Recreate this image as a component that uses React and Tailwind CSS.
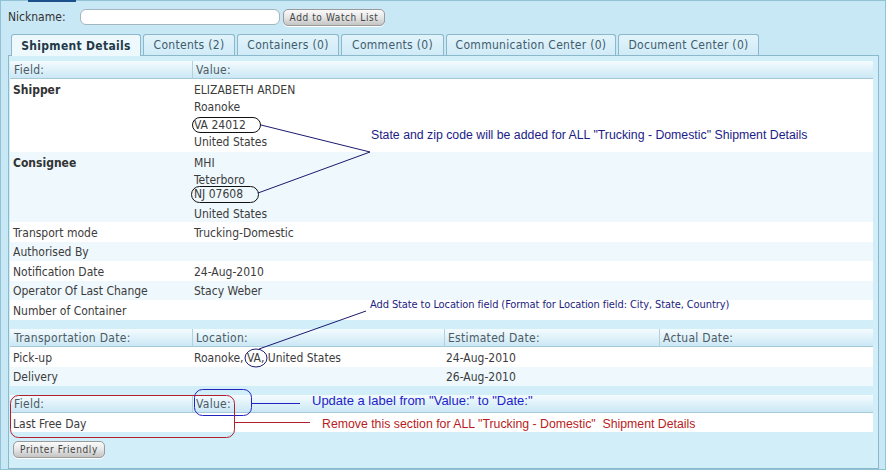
import React from "react";

const tabs = [
  { t: "Shipment Details", w: "w-[130px]", active: true },
  { t: "Contents (2)", w: "w-[92px]" },
  { t: "Containers (0)", w: "w-[102px]" },
  { t: "Comments (0)", w: "w-[103px]" },
  { t: "Communication Center (0)", w: "w-[170px]" },
  { t: "Document Center (0)", w: "w-[141px]" },
];

function Header({ cols }) {
  return (
    <div className="flex h-[18px] border-b border-[#a6c9da] bg-gradient-to-b from-[#f4fbfe] to-[#cbe8f5] text-[#4d5b64]">
      {cols.map((c, i) => (
        <div
          key={i}
          className={`${c.w} ${i > 0 ? "border-l border-[#b2d0de] pl-[3px]" : "pl-[4px]"} pt-[1px] leading-[16px] tracking-[0.3px]`}
        >
          {c.t}
        </div>
      ))}
    </div>
  );
}

function Row({ label, bold, lines, alt, h, pt, lineCls }) {
  const multi = lines.length > 1;
  return (
    <div className={`flex ${h} ${alt ? "bg-[#eef8fd]" : "bg-white"} ${pt}`}>
      <div className={`w-[182px] pl-[3px] ${bold ? "font-bold text-[#333]" : ""} ${multi ? "leading-[17px]" : "leading-[19px]"}`}>
        {label}
      </div>
      <div className="pl-[2px]">
        {lines.map((l, i) => (
          <div key={i} className={lineCls ? lineCls[i] : multi ? "leading-[17.3px]" : "leading-[19px]"}>
            {l}
          </div>
        ))}
      </div>
    </div>
  );
}

function Btn({ children, w }) {
  return (
    <div
      className={`${w} h-[17px] rounded-[5px] border border-[#9a9a9a] bg-gradient-to-b from-[#fafafa] via-[#e6e6e6] to-[#c4c4c4] flex items-center justify-center text-[10px] tracking-[0.6px] text-[#454545] shadow-[0_1px_0_#ffffff]`}
    >
      {children}
    </div>
  );
}

export default function App() {
  return (
    <div className="relative w-[892px] h-[474px] bg-white overflow-hidden font-['DejaVu_Sans_Condensed','DejaVu_Sans',sans-serif] text-[12px] text-[#3c3c3c]">
      <div className="w-[886px] h-[470px] border border-[#93c2d6] bg-[#c9e8f6] flex flex-col">
        <div className="flex items-center h-[18px] mt-[7px] ml-[7px]">
          <span className="w-[72px] text-[#333]">Nickname:</span>
          <div className="w-[200px] h-[16px] rounded-[6px] border border-[#a3b5bf] bg-white" />
          <div className="ml-[3px]">
            <Btn w="w-[102px]">Add to Watch List</Btn>
          </div>
        </div>
        <div className="flex mt-[8px] ml-[10px] h-[21px] items-start gap-[2px] relative z-10">
          {tabs.map((t) =>
            t.active ? (
              <div
                key={t.t}
                className={`${t.w} h-[22px] rounded-t-[3px] border border-b-0 border-[#8cb8cc] bg-[#eef9fd] flex items-center justify-center font-bold text-[#233a48] tracking-[0.3px]`}
              >
                {t.t}
              </div>
            ) : (
              <div
                key={t.t}
                className={`${t.w} h-[21px] rounded-t-[3px] border border-b-0 border-[#8cb8cc] bg-gradient-to-b from-[#e2f4fb] to-[#d0ebf7] flex items-center justify-center text-[#3f5d6d] tracking-[0.3px]`}
              >
                {t.t}
              </div>
            )
          )}
        </div>
        <div className="ml-[7px] w-[871px] flex-1 border border-[#8cb8cc] bg-[#d2eef9] pt-[5px] pl-[1px]">
          <div className="w-[863px]">
            <Header cols={[{ t: "Field:", w: "w-[182px]" }, { t: "Value:", w: "flex-1" }]} />
            <Row
              h="h-[73px]"
              pt="pt-[3px]"
              label="Shipper"
              bold
              lines={["ELIZABETH ARDEN", "Roanoke", "VA 24012", "United States"]}
            />
            <Row
              h="h-[70px]"
              pt="pt-[3px]"
              alt
              label="Consignee"
              bold
              lines={["MHI", "Teterboro", "NJ 07608", "United States"]}
              lineCls={[
                "h-[17px] leading-[17px]",
                "h-[16px] leading-[16px]",
                "h-[13px] leading-[13px]",
                "h-[17px] leading-[17px] mt-[5px]",
              ]}
            />
            <Row h="h-[20px]" pt="pt-[2px]" label="Transport mode" lines={["Trucking-Domestic"]} />
            <Row h="h-[19px]" pt="pt-[1px]" alt label="Authorised By" lines={[""]} />
            <Row h="h-[20px]" pt="pt-[2px]" label="Notification Date" lines={["24-Aug-2010"]} />
            <Row h="h-[19px]" pt="pt-[1px]" alt label="Operator Of Last Change" lines={["Stacy Weber"]} />
            <Row h="h-[20px]" pt="pt-[2px]" label="Number of Container" lines={[""]} />
            <div className="h-[9px]" />
            <Header
              cols={[
                { t: "Transportation Date:", w: "w-[182px]" },
                { t: "Location:", w: "w-[252px]" },
                { t: "Estimated Date:", w: "w-[215px]" },
                { t: "Actual Date:", w: "flex-1" },
              ]}
            />
            <div className="flex h-[20px] bg-white pt-[2px] leading-[19px]">
              <div className="w-[182px] pl-[3px]">Pick-up</div>
              <div className="w-[252px] pl-[2px]">Roanoke, VA, United States</div>
              <div className="pl-[2px]">24-Aug-2010</div>
            </div>
            <div className="flex h-[19px] bg-[#eef8fd] pt-[1px] leading-[19px]">
              <div className="w-[182px] pl-[3px]">Delivery</div>
              <div className="w-[252px] pl-[2px]"></div>
              <div className="pl-[2px]">26-Aug-2010</div>
            </div>
            <div className="h-[9px]" />
            <Header cols={[{ t: "Field:", w: "w-[182px]" }, { t: "Value:", w: "flex-1" }]} />
            <Row h="h-[19px]" pt="pt-[2px]" label="Last Free Day" lines={[""]} />
            <div className="mt-[9px] ml-[3px]">
              <Btn w="w-[92px]">Printer Friendly</Btn>
            </div>
          </div>
        </div>
      </div>

      <div className="absolute left-[28px] top-0 w-[48px] h-[2px] bg-[#1d4f8a]" />

      <svg className="absolute left-0 top-0 pointer-events-none" width="892" height="474" viewBox="0 0 892 474">
        <rect x="192.5" y="117.5" width="68" height="15" rx="7.5" fill="none" stroke="#111" strokeWidth="1" />
        <line x1="261" y1="125" x2="370" y2="152" stroke="#1a1a6e" strokeWidth="1" />
        <rect x="191.5" y="186.5" width="67" height="16" rx="8" fill="none" stroke="#111" strokeWidth="1" />
        <line x1="258" y1="193" x2="370" y2="152" stroke="#1a1a6e" strokeWidth="1" />
        <ellipse cx="256" cy="358" rx="11" ry="9" fill="none" stroke="#1a1a70" strokeWidth="1" />
        <line x1="259" y1="349" x2="366" y2="311" stroke="#1a1a70" strokeWidth="1" />
        <rect x="194.5" y="389.5" width="57" height="26" rx="8" fill="none" stroke="#2323c0" strokeWidth="1" />
        <line x1="251" y1="403.5" x2="300" y2="403.5" stroke="#2323c0" strokeWidth="1" />
        <rect x="10.5" y="395.5" width="224" height="42" rx="8" fill="none" stroke="#b0202e" strokeWidth="1" />
        <line x1="234" y1="422.5" x2="310" y2="422.5" stroke="#b0202e" strokeWidth="1" />
      </svg>

      <div className="absolute left-[371px] top-[127px] font-['Liberation_Sans',sans-serif] text-[12.3px] text-[#1c1c86] whitespace-nowrap leading-[16px]">
        State and zip code will be added for ALL "Trucking - Domestic" Shipment Details
      </div>
      <div className="absolute left-[370px] top-[297px] text-[11px] tracking-[-0.1px] text-[#1c2480] whitespace-nowrap leading-[16px]">
        Add State to Location field (Format for Location field: City, State, Country)
      </div>
      <div className="absolute left-[312px] top-[393px] font-['Liberation_Sans',sans-serif] text-[13px] text-[#1e1ec8] whitespace-nowrap leading-[16px]">
        Update a label from "Value:" to "Date:"
      </div>
      <div className="absolute left-[322px] top-[416px] font-['Liberation_Sans',sans-serif] text-[12.3px] text-[#b81c22] whitespace-nowrap leading-[16px]">
        Remove this section for ALL "Trucking - Domestic"&nbsp; Shipment Details
      </div>
    </div>
  );
}
